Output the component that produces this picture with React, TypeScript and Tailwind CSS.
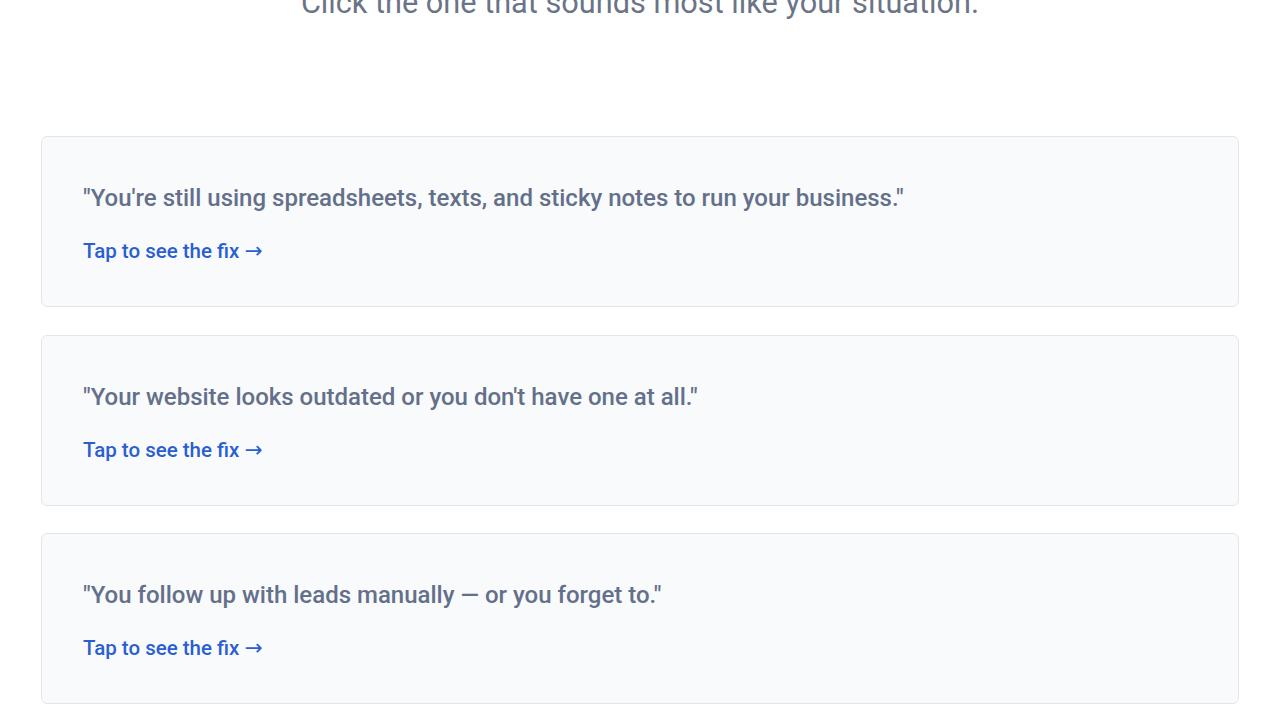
import React from "react";

const items = [
  "\"You're still using spreadsheets, texts, and sticky notes to run your business.\"",
  "\"Your website looks outdated or you don't have one at all.\"",
  "\"You follow up with leads manually \u2014 or you forget to.\"",
];

export default function App() {
  return (
    <div
      className="min-h-[720px] bg-white overflow-hidden"
      style={{ fontFamily: "Roboto, 'Noto Sans', sans-serif" }}
    >
      <h2 className="-mt-[17px] text-center text-[30.7px] leading-[40px] font-normal text-[#6b7487]">
        Click the one that sounds most like your situation.
      </h2>
      <div className="mt-[113px] px-[41px] flex flex-col gap-[27.5px]">
        {items.map((t) => (
          <div
            key={t}
            className="h-[171px] rounded-[6px] border border-[#e2e6ec] bg-[#f8fafc] pl-[41px] pt-[45px]"
          >
            <p className="text-[24px] leading-[32px] font-medium text-[#64708a]">{t}</p>
            <p className="mt-[23px] text-[20.5px] leading-[28px] font-medium text-[#2b5fd0]">
              Tap to see the fix{" "}
              <span style={{ fontFamily: "'DejaVu Sans', sans-serif" }} className="text-[21.5px]">
                →
              </span>
            </p>
          </div>
        ))}
      </div>
    </div>
  );
}
